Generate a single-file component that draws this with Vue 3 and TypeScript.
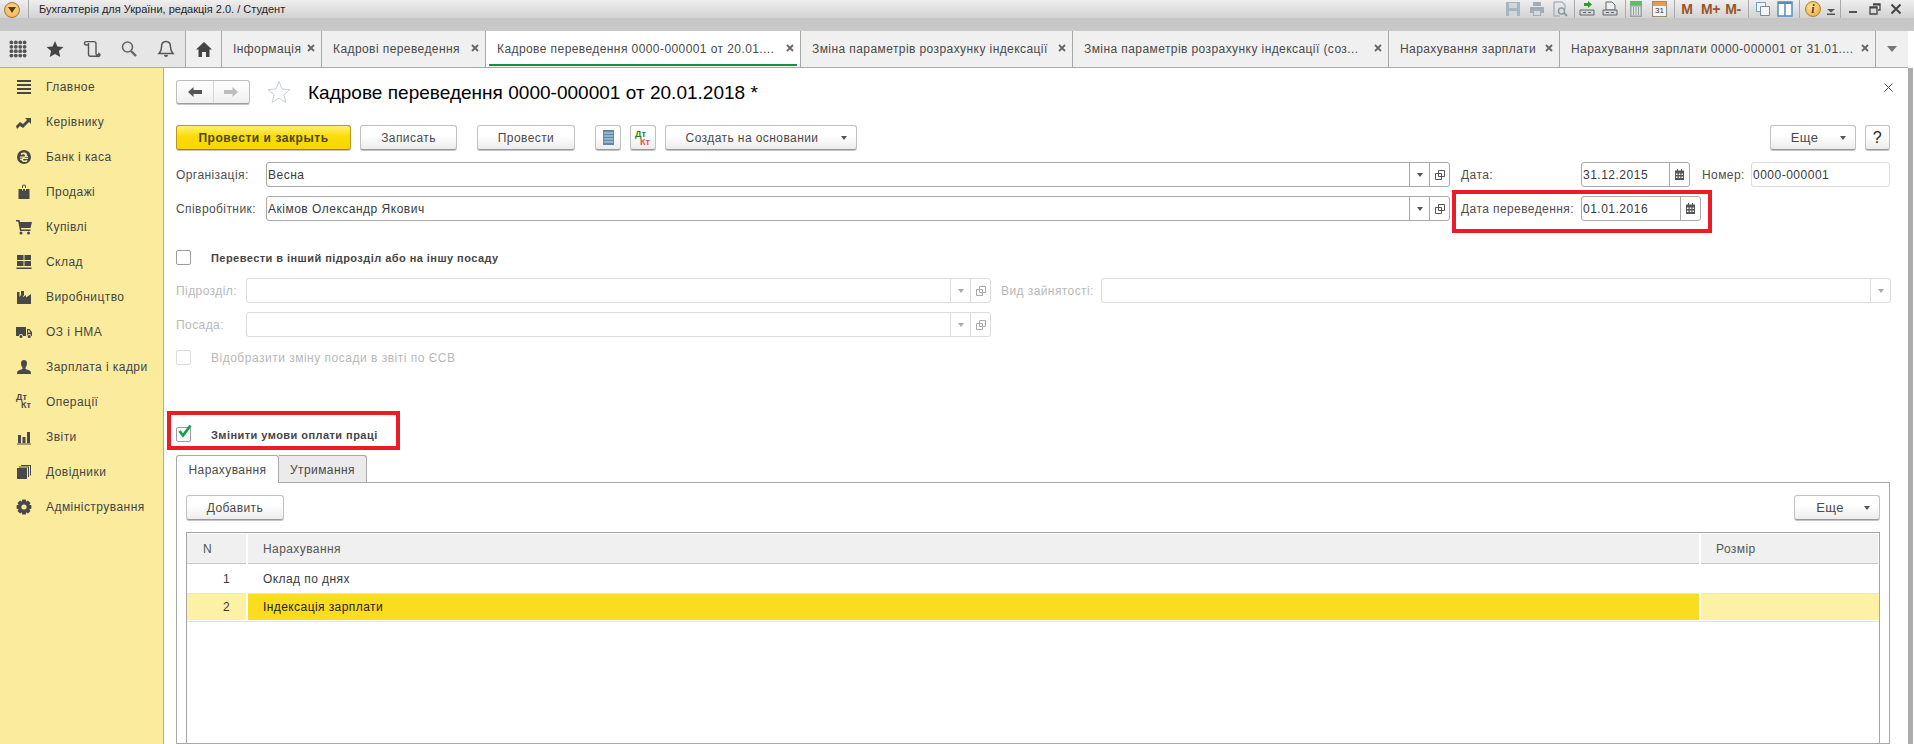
<script setup lang="ts">
function gear(): string {
  const cx = 8, cy = 8
  let d = ''
  const n = 8
  for (let i = 0; i < n; i++) {
    const a = (i / n) * Math.PI * 2
    const w = 0.24
    const pts = [
      [5.6, a - 0.42], [7.6, a - w], [7.6, a + w], [5.6, a + 0.42]
    ].map(([r, t]) => `${(cx + r * Math.cos(t)).toFixed(2)} ${(cy + r * Math.sin(t)).toFixed(2)}`)
    d += (i === 0 ? 'M' : 'L') + pts.join('L')
  }
  d += 'Z M8 5.4a2.6 2.6 0 1 0 0 5.2a2.6 2.6 0 1 0 0-5.2Z'
  return d
}

const menu = [
  { t: 'Главное', d: 'M1 1h14v2H1zM1 5h14v2H1zM1 9h14v2H1zM1 13h14v2H1z' },
  { t: 'Керівнику', d: 'M0 12l4-4 3 2 4-4-2-2h6v6l-2-2-6 6-3-2-3 3z' },
  { t: 'Банк і каса', d: 'M8 1a7 7 0 1 0 0 14a7 7 0 1 0 0-14ZM5 4.2C6.4 3.4 9.8 3 10.8 5c.3.8.1 1.3-.2 1.8H12v1.2H9.4l-1.2.8H12V10H7.2c-.4.9.4 1.6 1.6 1.5c.9 0 1.6-.2 2.4-.7v1.6c-1.8 1-5.4 1-5.8-1.4H4V9.8h1.6l1.4-1H4V7.6h4.4c.8-.6 1-1.6-.2-2.2c-.9-.3-2-.1-3.2.5z' },
  { t: 'Продажі', d: 'M6 4V2.5a2 2 0 0 1 4 0V4h-1V2.5a1 1 0 0 0-2 0V4zM2.5 5H6v1.5h1V5h2v1.5h1V5h3.500v10h-11z' },
  { t: 'Купівлі', d: 'M0 1h3.500l.5 2h12l-1.500 6H5l.3 1.500H14.500V12H4L2.200 2.500H0zM5 12.500a1.500 1.500 0 1 1 0 3a1.500 1.500 0 0 1 0-3zM12.500 12.500a1.500 1.500 0 1 1 0 3a1.500 1.500 0 0 1 0-3z' },
  { t: 'Склад', d: 'M1 1h6.500v5H1zM8.500 1H15v5H8.500zM1 7h6.500v5H1zM8.500 7H15v5H8.500zM0.500 13.500h15V15h-15z' },
  { t: 'Виробництво', d: 'M1 15V3h2.500v5L5 6V2h3v4l-1.500 2.500L10 6v2.500L15 5v10z' },
  { t: 'ОЗ і НМА', d: 'M0 3h10v9H7a2 2 0 0 0-4 0H0zM11 5h2.500L16 8v4h-.8a2 2 0 0 0-4 0H11zM12 6.200V8.500h2.500L13 6.200zM5 11a1.500 1.500 0 1 1 0 3a1.500 1.500 0 0 1 0-3zM13.200 11a1.500 1.500 0 1 1 0 3a1.500 1.500 0 0 1 0-3z' },
  { t: 'Зарплата і кадри', d: 'M8 1c2 0 3 1.500 3 3.500S10 8 9.500 8.500V10l4 1.500c1 .4 1.500 1.500 1.500 3.500H1c0-2 .5-3.100 1.500-3.500l4-1.500V8.500C6 8 5 6.500 5 4.500S6 1 8 1z' },
  { t: 'Операції', d: '', dt: true },
  { t: 'Звіти', d: 'M2 6h3v8H2zM6.500 8h3v6h-3zM11 3h3v11h-3zM1 14.500h14V15.500H1z' },
  { t: 'Довідники', d: 'M1 4h10v11H1zM3 2.500h10V13h-1V3.500H3zM5 1h10v10.500h-1V2H5z' },
  { t: 'Адміністрування', d: gear() }
]

const tabs = [
  { t: 'Інформація', w: 100 },
  { t: 'Кадрові переведення', w: 164 },
  { t: 'Кадрове переведення 0000-000001 от 20.01....', w: 315, active: true },
  { t: 'Зміна параметрів розрахунку індексації', w: 272 },
  { t: 'Зміна параметрів розрахунку індексації (соз...', w: 316 },
  { t: 'Нарахування зарплати', w: 171 },
  { t: 'Нарахування зарплати 0000-000001 от 31.01....', w: 316 }
]
const dots = [2.4, 6.8, 11.2, 15.6]
</script>

<template>
  <div class="app">
    <header class="titlebar">
      <span class="orb"><svg width="8" height="6" viewBox="0 0 8 6"><path d="M0 0h8L4 6z" fill="#5a3a10" /></svg></span>
      <span class="title-sep"></span>
      <span class="title-text">Бухгалтерія для України, редакція 2.0. / Студент</span>
      <div class="tools">
        <div class="tgroup g1">
          <svg class="ti" viewBox="0 0 16 16"><path d="M1 1h14v14H1z" fill="#a9b6c0" /><path d="M4 2h8v5H4zM4 10h8v5H4z" fill="#cfd6db" /></svg>
          <svg class="ti" viewBox="0 0 16 16"><path d="M4 1h8v4H4zM1 6h14v6h-3v3H4v-3H1z" fill="#a3adb5" /><path d="M5 10h6v4H5z" fill="#d6dadd" /></svg>
          <svg class="ti" viewBox="0 0 16 16"><path d="M2 1h8l3 3v4M2 1v14h6" fill="none" stroke="#a9b6c0" stroke-width="1.500" /><circle cx="9.500" cy="10" r="3" fill="none" stroke="#8c9aa5" stroke-width="1.500" /><path d="M12 12l3 3" stroke="#8c9aa5" stroke-width="2" /></svg>
        </div>
        <div class="tgroup g2">
          <svg class="ti" viewBox="0 0 16 16"><path d="M1 9h14v5H1z" fill="#d5d5d5" stroke="#5d6a73" /><path d="M4 11.500h3M9 11.500h3" stroke="#5d6a73" /><path d="M5 2h4V0l4 3.500L9 7V5H5z" fill="#1fa52f" /></svg>
          <svg class="ti" viewBox="0 0 16 16"><path d="M4 1h6l3 3v5H4z" fill="#eee" stroke="#5d6a73" /><path d="M1 9h14v5H1z" fill="#d5d5d5" stroke="#5d6a73" /><path d="M4 11.500h3M9 11.500h3" stroke="#5d6a73" /></svg>
        </div>
        <div class="tgroup g3">
          <svg class="ti" viewBox="0 0 16 16"><path d="M2 0h12v16H2z" fill="#9aa4a8" /><path d="M2 0h12v4H2z" fill="#55c45c" /><path d="M3.500 5.500h9v9h-9z" fill="#dfe4e4" /><path d="M5 7h1M7.500 7h1M10 7h1M5 9h1M7.500 9h1M10 9h1M5 11h1M7.500 11h1M10 11h1M5 13h1M7.500 13h1M10 13h1" stroke="#555" /></svg>
          <span class="cal"><span class="cal-top"></span><span class="cal-num">31</span></span>
        </div>
        <div class="tgroup g4">
          <b class="m">M</b><b class="m">M+</b><b class="m">M-</b>
        </div>
        <div class="tgroup g5">
          <svg class="ti" viewBox="0 0 16 16"><path d="M1.500 1.500h9v9h-9z" fill="#eef4fa" stroke="#6d9fc8" /><path d="M5.500 5.500h9v9h-9z" fill="#f5f5f5" stroke="#7a8a98" /></svg>
          <svg class="ti" viewBox="0 0 16 16"><path d="M1 1h14v14H1z" fill="#fff" stroke="#4f8fc4" stroke-width="1.500" /><path d="M1 1h14v2H1z" fill="#4f8fc4" /><path d="M8 2v13" stroke="#4f8fc4" stroke-width="1.500" /></svg>
        </div>
        <div class="tgroup g6">
          <span class="info-i">i</span>
          <svg class="info-d" width="8" height="6" viewBox="0 0 8 6"><path d="M0 0h8L4 3.500z M0 4.500h8V6H0z" fill="#555" /></svg>
        </div>
        <div class="wins">
          <svg class="wi" viewBox="0 0 12 12"><path d="M2 8h8v2H2z" fill="#555" /></svg>
          <svg class="wi" viewBox="0 0 12 12"><path d="M4 1h7v6H9M1 4h7v7H1z" fill="none" stroke="#444" stroke-width="1.300" /><path d="M4 1h7v1.500H4zM1 4h7v1.500H1z" fill="#444" /></svg>
          <svg class="wi" viewBox="0 0 12 12"><path d="M1.500 1.500l9 9M10.500 1.500l-9 9" stroke="#444" stroke-width="2" /></svg>
        </div>
      </div>
    </header>

    <nav class="tabsbar">
      <div class="panel-icons">
        <svg class="pi" viewBox="0 0 18 18"><g fill="#555"><template v-for="y in dots" :key="y"><circle v-for="x in dots" :key="x" :cx="x" :cy="y" r="1.900" /></template></g></svg>
        <svg class="pi" viewBox="0 0 18 18"><path d="M9 1l2.400 5.600 6.100.5-4.600 4 1.400 6L9 13.900 3.700 17.100l1.400-6-4.600-4 6.100-.5z" fill="#444" /></svg>
        <svg class="pi" viewBox="0 0 18 18"><path d="M5.500 5H3.200a1.700 1.700 0 1 1 0-3.400H11c1.200 0 2 .7 2 2V13.500a1.500 1.500 0 0 0 3 0 1.500 1.500 0 0 1-1.500 2.800H7.500c-1.200 0-2-.8-2-2V3" fill="none" stroke="#555" stroke-width="1.400" /></svg>
        <svg class="pi" viewBox="0 0 18 18"><circle cx="7.500" cy="7" r="5" fill="none" stroke="#666" stroke-width="1.600" /><path d="M11 11l5 5" stroke="#666" stroke-width="2.400" /></svg>
        <svg class="pi" viewBox="0 0 18 18"><path d="M9 1.500c3 0 4.500 2 4.500 5.500 0 4 1 5 2.500 6.500H2c1.500-1.500 2.500-2.500 2.500-6.500C4.500 3.500 6 1.500 9 1.500z" fill="none" stroke="#555" stroke-width="1.500" /><path d="M7 15h4a2 2 0 0 1-4 0z" fill="#555" /></svg>
      </div>
      <div class="tab home"><svg width="16" height="15" viewBox="0 0 16 15"><path d="M8 0l8 7.500h-2.500V15H10v-5H6v5H2.500V7.500H0z" fill="#444" /></svg></div>
      <div v-for="t in tabs" :key="t.t" class="tab" :class="{ active: t.active }" :style="{ width: t.w + 'px' }">
        <span class="tab-text">{{ t.t }}</span>
        <svg class="tab-x" width="8" height="8" viewBox="0 0 8 8"><path d="M1 1l6 6M7 1L1 7" stroke="#666" stroke-width="1.800" /></svg>
      </div>
      <div class="tab more"><svg width="10" height="6" viewBox="0 0 10 6"><path d="M0 0h10L5 6z" fill="#777" /></svg></div>
    </nav>

    <div class="main">
      <aside class="side">
        <div v-for="m in menu" :key="m.t" class="side-row">
          <svg v-if="!m.dt" class="side-i" viewBox="0 0 16 16"><path :d="m.d" fill-rule="evenodd" /></svg>
          <span v-else class="side-dk"><b>Дт</b><b class="k">Кт</b></span>
          <span>{{ m.t }}</span>
        </div>
      </aside>

      <section class="content">
        <div class="form-head">
          <div class="navbtns">
            <span class="nb"><svg width="14" height="10" viewBox="0 0 14 10"><path d="M5.500 0v3H14v4H5.500v3L0 5z" fill="#555" /></svg></span>
            <span class="nb off"><svg width="14" height="10" viewBox="0 0 14 10"><path d="M8.500 0v3H0v4h8.500v3L14 5z" fill="#bdbdbd" /></svg></span>
          </div>
          <svg class="star" width="24" height="24" viewBox="0 0 24 24"><path d="M12 1.500l3 7.500 8 .6-6.100 5.100 2 7.800L12 18.200l-6.900 4.300 2-7.800L1 9.600 9 9z" fill="#fff" stroke="#c6ced4" /></svg>
          <h1 class="title">Кадрове переведення 0000-000001 от 20.01.2018 *</h1>
          <svg class="form-x" width="9" height="9" viewBox="0 0 9 9"><path d="M.5.500l8 8M8.500.500l-8 8" stroke="#555" /></svg>
        </div>

        <div class="cmd">
          <button class="btn primary w-prim">Провести и закрыть</button>
          <button class="btn w-save">Записать</button>
          <button class="btn w-post">Провести</button>
          <button class="btn ico reg"><svg width="11" height="15" viewBox="0 0 11 15"><path d="M0 0h11v15H0z" fill="#5f89a8" /><path d="M1 3h9M1 6h9M1 9h9M1 12h9" stroke="#cfe0ea" /></svg></button>
          <button class="btn ico dk"><b class="g">Дт</b><b class="r">Кт</b></button>
          <button class="btn w-make">Создать на основании<i class="caret"></i></button>
          <span class="spacer"></span>
          <button class="btn w-more up">Еще<i class="caret"></i></button>
          <button class="btn w-help">?</button>
        </div>

        <div class="row r1">
          <label class="lb w90">Організація:</label>
          <div class="inp w-org"><span class="val">Весна</span><i class="sb dd"><i class="caret"></i></i><i class="sb op"><svg width="10" height="10" viewBox="0 0 10 10"><path d="M3.500.500h6v6h-6zM.5 3.500h6v6h-6z" fill="#fff" stroke="#555" /></svg></i></div>
          <label class="lb w120 ml11">Дата:</label>
          <div class="inp w-d1"><span class="val">31.12.2015</span><i class="sb cale"><svg width="9" height="11" viewBox="0 0 9 11"><path d="M2 0h1v2H2zM6 0h1v2H6zM0 1.500h9V11H0z" fill="#555" /><path d="M1 4.500h1.500V6H1zM3.800 4.500h1.500V6H3.800zM6.500 4.500H8V6H6.500zM1 7.500h1.500V9H1zM3.800 7.500h1.500V9H3.800zM6.500 7.500H8V9H6.500z" fill="#fff" /></svg></i></div>
          <label class="lb w49 ml12">Номер:</label>
          <div class="inp light w-num"><span class="val">0000-000001</span></div>
        </div>

        <div class="row r2">
          <label class="lb w90">Співробітник:</label>
          <div class="inp w-org"><span class="val">Акімов Олександр Якович</span><i class="sb dd"><i class="caret"></i></i><i class="sb op"><svg width="10" height="10" viewBox="0 0 10 10"><path d="M3.500.500h6v6h-6zM.5 3.500h6v6h-6z" fill="#fff" stroke="#555" /></svg></i></div>
          <label class="lb w120 ml11">Дата переведення:</label>
          <div class="inp w-d2"><span class="val">01.01.2016</span><i class="sb cale"><svg width="9" height="11" viewBox="0 0 9 11"><path d="M2 0h1v2H2zM6 0h1v2H6zM0 1.500h9V11H0z" fill="#555" /><path d="M1 4.500h1.500V6H1zM3.800 4.500h1.500V6H3.800zM6.500 4.500H8V6H6.500zM1 7.500h1.500V9H1zM3.800 7.500h1.500V9H3.800zM6.500 7.500H8V9H6.500z" fill="#fff" /></svg></i></div>
        </div>

        <div class="chk c1"><span class="box"></span><b>Перевести в інший підрозділ або на іншу посаду</b></div>

        <div class="row r3 dis">
          <label class="lb w70">Підрозділ:</label>
          <div class="inp w-dep"><i class="sb dd"><i class="caret"></i></i><i class="sb op"><svg width="10" height="10" viewBox="0 0 10 10"><path d="M3.500.500h6v6h-6zM.5 3.500h6v6h-6z" fill="#fff" stroke="#aaa" /></svg></i></div>
          <label class="lb w100 ml10">Вид зайнятості:</label>
          <div class="inp w-emp"><i class="sb dd"><i class="caret"></i></i></div>
        </div>
        <div class="row r4 dis">
          <label class="lb w70">Посада:</label>
          <div class="inp w-dep"><i class="sb dd"><i class="caret"></i></i><i class="sb op"><svg width="10" height="10" viewBox="0 0 10 10"><path d="M3.500.500h6v6h-6zM.5 3.500h6v6h-6z" fill="#fff" stroke="#aaa" /></svg></i></div>
        </div>
        <div class="chk c2 dis"><span class="box"></span><span>Відобразити зміну посади в звіті по ЄСВ</span></div>

        <div class="chk c3"><span class="box"><svg class="tick" width="16" height="15" viewBox="0 0 16 15"><path d="M2.500 7l3.500 4.500L13.500 1.500" fill="none" stroke="#14a04a" stroke-width="2.800" /></svg></span><b>Змінити умови оплати праці</b></div>

        <div class="tabs2">
          <span class="t2 on">Нарахування</span>
          <span class="t2">Утримання</span>
        </div>
        <div class="pane">
          <div class="pane-cmd">
            <button class="btn w-add">Добавить</button>
            <button class="btn w-more">Еще<i class="caret"></i></button>
          </div>
          <div class="grid">
            <div class="g-row head"><div class="c cn">N</div><div class="c cm">Нарахування</div><div class="c cs">Розмір</div></div>
            <div class="g-row r-a"><div class="c cn num">1</div><div class="c cm">Оклад по днях</div><div class="c cs"></div></div>
            <div class="g-row r-b"><div class="c cn num">2</div><div class="c cm">Індексація зарплати</div><div class="c cs"></div></div>
          </div>
        </div>

        <i class="mark m1"></i>
        <i class="mark m2"></i>
      </section>
      <div class="edge"></div>
    </div>
  </div>
</template>

<style>
html, body { margin: 0; background: #fff; overflow: hidden; }
</style>

<style scoped>
.app { width: 1914px; height: 744px; display: flex; flex-direction: column; overflow: hidden; font: 12px "Liberation Sans", Arial, sans-serif; color: #4a4a4a; background: #fff; }
.titlebar { height: 31px; flex: none; display: flex; align-items: flex-start; background: linear-gradient(#efefef 0, #d2d2d2 18px, #c6c6c6 18px, #c8c8c8 31px); }
.orb { width: 16px; height: 16px; margin: 2px 0 0 4px; border-radius: 50%; border: 1px solid #a87a2c; background: radial-gradient(circle at 50% 40%, #fde0a0, #f0a73c); display: flex; align-items: center; justify-content: center; box-sizing: border-box; }
.title-sep { width: 1px; height: 18px; margin-left: 8px; background: #a8a8a8; }
.title-text { margin-left: 10px; font-size: 11px; line-height: 18px; color: #222; }
.tools { margin-left: auto; display: flex; height: 18px; padding-right: 12px; }
.tgroup { display: flex; align-items: center; border-right: 1px solid #aaa; }
.g1 { gap: 7.5px; padding: 0 6px 0 0; }
.g2 { gap: 7px; padding: 0 7px 0 4px; }
.g3 { gap: 8px; padding: 0 7px 0 2px; }
.g4 { gap: 5px; padding: 0 6px 0 3px; }
.g5 { gap: 6px; padding: 0 6px; }
.g6 { gap: 6px; padding: 0 5px; }
.ti { width: 16px; height: 16px; display: block; flex: none; }
.cal { width: 15px; height: 16px; display: block; position: relative; background: #f3f3f3; border: 1px solid #9a8a78; box-sizing: border-box; }
.cal-top { display: block; height: 4px; background: #e89a55; }
.cal-num { display: block; font-size: 8px; line-height: 10px; text-align: center; color: #333; }
.m { font-size: 14px; color: #97562a; width: 18px; text-align: center; white-space: nowrap; letter-spacing: -.3px; }
.info-i { width: 16px; height: 16px; border-radius: 50%; background: radial-gradient(circle at 40% 35%, #fde39a, #eaa530); border: 1px solid #b08033; color: #5a3c10; font: italic bold 12px/16px "Liberation Serif", serif; text-align: center; box-sizing: border-box; line-height: 14px; }
.info-d { margin-top: 5px; }
.wins { display: flex; align-items: center; gap: 9.5px; padding-left: 6px; }
.wi { width: 12px; height: 12px; display: block; }

.tabsbar { height: 37px; flex: none; display: flex; box-sizing: border-box; border-bottom: 1px solid #a9a9a9; background: #c8c8c8; width: 1908px; }
.panel-icons { width: 186px; flex: none; display: flex; align-items: center; gap: 19px; padding-left: 9px; background: #e6e6e6; border-right: 1px solid #a9a9a9; box-sizing: border-box; }
.pi { width: 18px; height: 18px; flex: none; display: block; }
.tab { height: 100%; flex: none; box-sizing: border-box; display: flex; align-items: center; padding: 0 6px 0 11px; background: #f0f0f0; border-right: 1px solid #a9a9a9; position: relative; color: #4a4a4a; }
.home { width: 36px; justify-content: center; padding: 0; }
.more { width: 32px; justify-content: center; padding: 0; border-right: 0; }
.tab.active { background: #fff; }
.tab.active::after { content: ""; position: absolute; left: 3px; right: 3px; bottom: 1px; height: 2px; background: #0f9347; }
.tab-text { white-space: nowrap; font-size: 12px; letter-spacing: .42px; }
.tab-x { margin-left: auto; margin-top: -3px; }

.main { flex: 1; min-height: 0; display: flex; }
.side { width: 164px; flex: none; box-sizing: border-box; background: #fbec9d; border-right: 1px solid #c8b242; padding-top: 1px; }
.side-row { height: 35px; display: flex; align-items: center; padding-left: 16px; gap: 14px; font-size: 12px; letter-spacing: .45px; color: #444; }
.side-i { width: 16px; height: 16px; flex: none; fill: #484848; display: block; }
.side-dk { width: 16px; height: 16px; flex: none; position: relative; font-size: 9px; line-height: 9px; color: #484848; letter-spacing: 0; }
.side-dk b { position: absolute; left: 0; top: -1px; }
.side-dk .k { left: 5px; top: 7px; }

.content { flex: 1; min-width: 0; box-sizing: border-box; padding: 12px 18px 0 12px; display: flex; flex-direction: column; position: relative; }
.edge { width: 5px; flex: none; background: #acacac; margin-right: 1px; }
.form-head { height: 24px; display: flex; align-items: center; flex: none; }
.navbtns { width: 74px; height: 24px; box-sizing: border-box; display: flex; border: 1px solid #bdbdbd; border-bottom-color: #9d9d9d; border-radius: 3px; background: linear-gradient(#fff, #f0f0f0); box-shadow: 0 1px 0 #c8c8c8; }
.nb { flex: 1; display: flex; align-items: center; justify-content: center; }
.nb:first-child { border-right: 1px solid #d5d5d5; }
.star { margin-left: 17px; flex: none; }
.title { margin: 2px 0 0 17px; font-size: 19px; letter-spacing: .02px; font-weight: 400; color: #000; white-space: nowrap; }
.form-x { margin-left: auto; margin-right: -3px; margin-top: -10px; }

.cmd { margin-top: 21px; display: flex; height: 25px; flex: none; align-items: stretch; }
.btn { box-sizing: border-box; height: 25px; padding: 0; position: relative; font: 12px "Liberation Sans", Arial, sans-serif; letter-spacing: .42px; color: #4a4a4a; border: 1px solid #c2c2c2; border-bottom-color: #9a9a9a; border-radius: 3px; background: linear-gradient(#fff 40%, #ececec); box-shadow: 0 1px 0 #c4c4c4; display: flex; align-items: center; justify-content: center; }
.primary { background: linear-gradient(#fff072, #fbdc08 45%, #f7d500); border-color: #b49a20; border-bottom-color: #9c8420; color: #4f4513; font-weight: 700; letter-spacing: .55px; }
.w-prim { width: 175px; }
.w-save { width: 97px; margin-left: 9px; }
.w-post { width: 98px; margin-left: 20px; }
.ico { width: 26px; }
.reg { margin-left: 20px; }
.dk { margin-left: 9px; position: relative; }
.dk b { position: absolute; font-size: 9px; line-height: 10px; letter-spacing: 0; }
.dk .g { left: 4px; top: 3px; color: #2b7d10; }
.dk .r { left: 9px; top: 11px; color: #f4494d; }
.w-make { width: 192px; margin-left: 9px; padding-right: 18px; }
.spacer { flex: 1; }
.w-more { width: 86px; padding-right: 14px; font-size: 13px; }
.w-more.up { padding-right: 17px; }
.w-help { width: 25px; margin-left: 9px; font-size: 16px; color: #222; }
.caret { position: absolute; right: 9px; top: 10px; width: 0; height: 0; border: 3px solid transparent; border-top: 4px solid #555; border-bottom: 0; }

.row { display: flex; align-items: center; height: 25px; flex: none; }
.r1 { margin-top: 12px; }
.r2 { margin-top: 9px; }
.r3 { margin-top: 13px; }
.r4 { margin-top: 9px; }
.lb { flex: none; font-size: 12px; letter-spacing: .42px; white-space: nowrap; color: #4e4e4e; }
.w90 { width: 90px; }
.w120 { width: 120px; }
.w49 { width: 49px; }
.w70 { width: 70px; }
.w100 { width: 100px; }
.ml10 { margin-left: 10px; }
.ml11 { margin-left: 11px; }
.ml12 { margin-left: 12px; }
.inp { box-sizing: border-box; height: 25px; flex: none; border: 1px solid #a9a9a9; border-radius: 3px; display: flex; align-items: center; background: #fff; color: #3a3a3a; }
.inp.light { border-color: #dcdcdc; }
.val { flex: 1; padding-left: 1px; font-size: 12px; letter-spacing: .5px; white-space: nowrap; }
.w-org { width: 1184px; }
.w-d1 { width: 109px; }
.w-d2 { width: 120px; }
.w-num { width: 139px; }
.w-dep { width: 745px; justify-content: flex-end; }
.w-emp { width: 790px; justify-content: flex-end; }
.sb { position: relative; height: 100%; flex: none; display: flex; align-items: center; justify-content: center; border-left: 1px solid #a9a9a9; box-sizing: border-box; }
.sb .caret { right: auto; top: 10px; left: 50%; margin-left: -3px; }
.dd { width: 20px; }
.op { width: 20px; }
.cale { width: 20px; }

.dis .lb { color: #b8b8b8; }
.dis .inp { border-color: #dcdcdc; }
.dis .sb { border-left-color: #dcdcdc; }
.dis .caret { border-top-color: #aaa; }

.chk { display: flex; align-items: center; height: 15px; flex: none; white-space: nowrap; }
.chk b { font-size: 11px; color: #454545; letter-spacing: .45px; }
.box { width: 15px; height: 15px; box-sizing: border-box; border: 1px solid #9c9c9c; border-radius: 2px; margin-right: 20px; flex: none; position: relative; background: #fff; }
.tick { position: absolute; left: 0; top: -4px; }
.c1 { margin-top: 29px; }
.c2 { margin-top: 13px; color: #b8b8b8; letter-spacing: .5px; }
.c2 .box { border-color: #dcdcdc; }
.c3 { margin-top: 62px; }

.tabs2 { margin-top: 13px; height: 28px; flex: none; display: flex; align-items: stretch; }
.t2 { box-sizing: border-box; width: 88px; display: flex; align-items: center; justify-content: center; border: 1px solid #a9a9a9; border-left: 0; border-bottom: 0; border-radius: 0 3px 0 0; background: #ebebeb; letter-spacing: .42px; color: #4a4a4a; box-shadow: inset 0 -1px 0 #a9a9a9; }
.t2.on { width: 103px; background: #fff; border-left: 1px solid #a9a9a9; border-right: 1px solid #a9a9a9; border-radius: 3px 3px 0 0; box-shadow: none; }
.pane { flex: 1; min-height: 0; box-sizing: border-box; border: 1px solid #a9a9a9; border-top: 0; position: relative; padding: 12px 9px 0 9px; }
.pane::before { content: ""; position: absolute; left: 102px; right: -1px; top: -1px; height: 1px; background: #a9a9a9; }
.pane-cmd { display: flex; justify-content: space-between; height: 25px; }
.w-add { width: 98px; }
.grid { margin-top: 12px; height: 300px; box-sizing: border-box; border: 1px solid #a5a5a5; }
.g-row { display: flex; }
.c { box-sizing: border-box; display: flex; align-items: center; letter-spacing: .42px; color: #3a3a3a; height: 100%; }
.cn { width: 59px; padding-left: 16px; }
.cm { width: 1453px; padding-left: 15px; border-left: 2px solid #fff; }
.cs { flex: 1; padding-left: 15px; border-left: 2px solid #fff; }
.num { justify-content: flex-end; padding: 0 16px 0 0; }
.head { height: 31px; background: #f0f0f0; border: solid #fff; border-width: 1px 1px 0 0; box-sizing: border-box; box-shadow: inset 0 -1px 0 #c9c9c9; }
.head .c { color: #555; }
.r-a { height: 30px; box-shadow: inset 0 -1px 0 #e4e4e4; }
.r-b { height: 28px; box-shadow: inset 0 -1px 0 #e4e4e4; padding-bottom: 2px; box-sizing: border-box; }
.r-b .cn, .r-b .cs { background: #fdf1a5; }
.r-b .cm { background: #fcdc1f; color: #222; }

.mark { position: absolute; border: 4px solid #ed1c24; box-sizing: border-box; pointer-events: none; }
.m1 { left: 1288px; top: 122px; width: 260px; height: 43px; }
.m2 { left: 3px; top: 343px; width: 233px; height: 39px; }
</style>
